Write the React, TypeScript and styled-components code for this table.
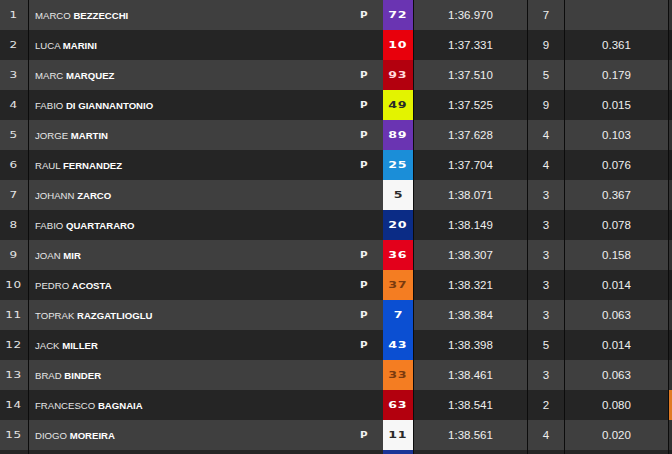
import React from "react";
import styled, { createGlobalStyle } from "styled-components";

const Global = createGlobalStyle`
  html, body { margin: 0; padding: 0; background: #1f1f1f; overflow: hidden; }
  body { width: 672px; height: 454px; }
`;

type Rider = {
  pos: string;
  first: string;
  last: string;
  p: boolean;
  num: string;
  bg: string;
  fg: string;
  time: string;
  laps: string;
  gap: string;
  edge?: string;
};

const riders: Rider[] = [
  { pos: "1", first: "MARCO", last: "BEZZECCHI", p: true, num: "72", bg: "#6a34b2", fg: "#ffffff", time: "1:36.970", laps: "7", gap: "" },
  { pos: "2", first: "LUCA", last: "MARINI", p: false, num: "10", bg: "#e8000c", fg: "#ffffff", time: "1:37.331", laps: "9", gap: "0.361" },
  { pos: "3", first: "MARC", last: "MARQUEZ", p: true, num: "93", bg: "#b3000e", fg: "#ffd9dc", time: "1:37.510", laps: "5", gap: "0.179" },
  { pos: "4", first: "FABIO", last: "DI GIANNANTONIO", p: true, num: "49", bg: "#e3f300", fg: "#2a2a2a", time: "1:37.525", laps: "9", gap: "0.015" },
  { pos: "5", first: "JORGE", last: "MARTIN", p: true, num: "89", bg: "#6a34b2", fg: "#ffffff", time: "1:37.628", laps: "4", gap: "0.103" },
  { pos: "6", first: "RAUL", last: "FERNANDEZ", p: true, num: "25", bg: "#1b8ed8", fg: "#ffffff", time: "1:37.704", laps: "4", gap: "0.076" },
  { pos: "7", first: "JOHANN", last: "ZARCO", p: false, num: "5", bg: "#f7f7f7", fg: "#2a2a2a", time: "1:38.071", laps: "3", gap: "0.367" },
  { pos: "8", first: "FABIO", last: "QUARTARARO", p: false, num: "20", bg: "#0b2c86", fg: "#ffffff", time: "1:38.149", laps: "3", gap: "0.078" },
  { pos: "9", first: "JOAN", last: "MIR", p: true, num: "36", bg: "#e3001b", fg: "#ffffff", time: "1:38.307", laps: "3", gap: "0.158" },
  { pos: "10", first: "PEDRO", last: "ACOSTA", p: true, num: "37", bg: "#f47d22", fg: "#7a3a0e", time: "1:38.321", laps: "3", gap: "0.014" },
  { pos: "11", first: "TOPRAK", last: "RAZGATLIOGLU", p: true, num: "7", bg: "#0b4fd2", fg: "#ffffff", time: "1:38.384", laps: "3", gap: "0.063" },
  { pos: "12", first: "JACK", last: "MILLER", p: true, num: "43", bg: "#0b4fd2", fg: "#ffffff", time: "1:38.398", laps: "5", gap: "0.014" },
  { pos: "13", first: "BRAD", last: "BINDER", p: false, num: "33", bg: "#f47d22", fg: "#7a3a0e", time: "1:38.461", laps: "3", gap: "0.063" },
  { pos: "14", first: "FRANCESCO", last: "BAGNAIA", p: false, num: "63", bg: "#b3000e", fg: "#ffffff", time: "1:38.541", laps: "2", gap: "0.080", edge: "#e07a24" },
  { pos: "15", first: "DIOGO", last: "MOREIRA", p: true, num: "11", bg: "#f7f7f7", fg: "#2a2a2a", time: "1:38.561", laps: "4", gap: "0.020" },
  { pos: "", first: "", last: "", p: false, num: "", bg: "#1b3597", fg: "#ffffff", time: "", laps: "", gap: "" },
];

const Table = styled.div`
  display: flex;
  flex-direction: column;
  width: 672px;
  height: 454px;
  overflow: hidden;
`;

const Row = styled.div<{ $odd: boolean }>`
  display: grid;
  grid-template-columns: 29px 354px 31px 114px 37px 104px 3px;
  height: 30px;
  flex: 0 0 30px;
  background: ${(p) => (p.$odd ? "#3f3f3f" : "#252525")};
  color: #ececec;
`;

const Cell = styled.div<{ $line?: boolean }>`
  box-sizing: border-box;
  display: flex;
  align-items: center;
  justify-content: center;
  border-right: ${(p) => (p.$line ? "1px solid #0c0c0c" : "none")};
  overflow: hidden;
`;

const Wide = styled.span<{ $bold?: boolean }>`
  display: inline-block;
  font-family: "DejaVu Sans", sans-serif;
  font-weight: ${(p) => (p.$bold ? 700 : 400)};
  font-size: 9px;
  letter-spacing: 0.5px;
  transform: scaleX(1.3);
`;

const PosText = styled(Wide)`
  color: #e4e4e4;
  font-size: 8px;
  transform: scaleX(1.5);
`;

const NameCell = styled(Cell)`
  justify-content: space-between;
  padding-left: 6px;
  padding-right: 16px;
`;

const Name = styled.span`
  font-family: "Liberation Sans", Arial, sans-serif;
  font-size: 9.6px;
  color: #e6e6e6;
  white-space: nowrap;
  b {
    font-weight: 700;
    color: #ffffff;
  }
`;

const PMark = styled(Wide)`
  color: #f2f2f2;
  font-weight: 700;
  font-size: 8px;
  transform: scaleX(1.3);
`;

const NumBox = styled(Cell)<{ $bg: string; $fg: string }>`
  background: ${(p) => p.$bg};
  color: ${(p) => p.$fg};
`;

const NumText = styled(Wide)`
  font-size: 9px;
  letter-spacing: 0.4px;
  transform: scaleX(1.4);
`;

const Value = styled.span`
  font-family: "Liberation Sans", Arial, sans-serif;
  font-size: 11.5px;
  color: #efefef;
`;

const Edge = styled.div<{ $c?: string }>`
  background: ${(p) => p.$c ?? "rgba(0,0,0,0.18)"};
`;

export default function App() {
  return (
    <>
      <Global />
      <Table>
        {riders.map((r, i) => (
          <Row key={i} $odd={i % 2 === 0}>
            <Cell $line>
              <PosText>{r.pos}</PosText>
            </Cell>
            <NameCell>
              <Name>
                {r.first} <b>{r.last}</b>
              </Name>
              {r.p && <PMark>P</PMark>}
            </NameCell>
            <NumBox $line $bg={r.bg} $fg={r.fg}>
              <NumText $bold>{r.num}</NumText>
            </NumBox>
            <Cell $line>
              <Value>{r.time}</Value>
            </Cell>
            <Cell $line>
              <Value>{r.laps}</Value>
            </Cell>
            <Cell $line>
              <Value>{r.gap}</Value>
            </Cell>
            <Edge $c={r.edge} />
          </Row>
        ))}
      </Table>
    </>
  );
}
